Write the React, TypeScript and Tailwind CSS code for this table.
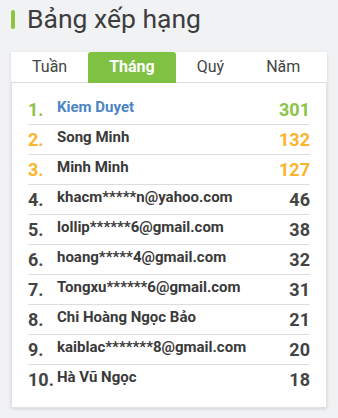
import React from 'react';

interface Row {
  name: string;
  score: number;
}

const rows: Row[] = [
  { name: 'Kiem Duyet', score: 301 },
  { name: 'Song Minh', score: 132 },
  { name: 'Minh Minh', score: 127 },
  { name: 'khacm*****n@yahoo.com', score: 46 },
  { name: 'lollip******6@gmail.com', score: 38 },
  { name: 'hoang*****4@gmail.com', score: 32 },
  { name: 'Tongxu******6@gmail.com', score: 31 },
  { name: 'Chi Hoàng Ngọc Bảo', score: 21 },
  { name: 'kaiblac*******8@gmail.com', score: 20 },
  { name: 'Hà Vũ Ngọc', score: 18 },
];

const tabs = ['Tuần', 'Tháng', 'Quý', 'Năm'];

const App: React.FC = () => {
  return (
    <div className="w-[338px] h-[418px] bg-[#f1f2f4] px-[11px] pt-[3px] font-['Roboto',sans-serif] overflow-hidden">
      <div className="flex items-center gap-[12px]">
        <span className="w-[4px] h-[19px] rounded-full bg-[#8cc63f]" />
        <h1 className="text-[26.5px] leading-[32px] text-[#3d3d3d] font-normal">Bảng xếp hạng</h1>
      </div>

      <div className="mt-[17px] bg-white shadow-[0_1px_3px_rgba(0,0,0,0.13)]">
        <div className="flex h-[31px] border-b border-[#dcdcdc]">
          {tabs.map((t, i) =>
            i === 1 ? (
              <div key={t} className="h-[31px] px-[21px] rounded-t-[3px] bg-[#7fc243] text-white font-bold text-[16px] leading-[30px]">
                {t}
              </div>
            ) : (
              <div key={t} className="h-[30px] px-[21px] text-[#444] text-[16px] leading-[30px]">
                {t}
              </div>
            )
          )}
        </div>

        <div className="border-x border-b border-[#e2e2e2] px-[16px] pt-[12px] pb-[12px]">
          {rows.map((r, i) => {
            const rank = i + 1;
            const rankColor = rank === 1 ? 'text-[#8bc34a]' : rank <= 3 ? 'text-[#fbb42b]' : 'text-[#444]';
            const nameColor = rank === 1 ? 'text-[#4b85c6]' : 'text-[#3a3a3a]';
            return (
              <div
                key={r.name}
                className={`flex h-[30px] ${rank < rows.length ? 'border-b border-[#dddddd]' : ''}`}
              >
                <span className={`w-[29px] shrink-0 pt-[6px] text-[18px] leading-none font-bold ${rankColor}`}>
                  {rank}.
                </span>
                <span className={`flex-1 pt-[5px] text-[15px] leading-none font-bold ${nameColor}`}>{r.name}</span>
                <span className={`pt-[6px] text-[18px] leading-none font-bold ${rankColor}`}>{r.score}</span>
              </div>
            );
          })}
        </div>
      </div>
    </div>
  );
};

export default App;
